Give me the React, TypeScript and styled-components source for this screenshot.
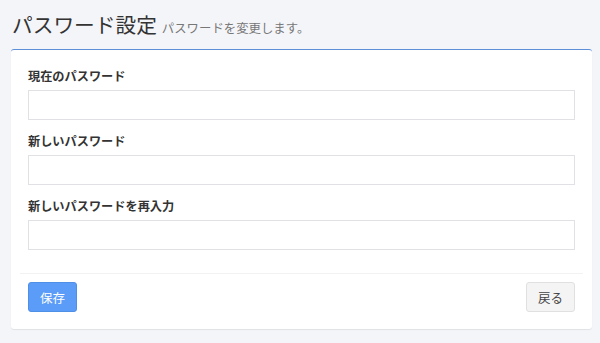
import * as React from "react";
import styled, { createGlobalStyle } from "styled-components";

const FONT = `"Noto Sans CJK JP", "Noto Sans", sans-serif`;

const GlobalStyle = createGlobalStyle`
  html, body {
    margin: 0;
    padding: 0;
    background: #f4f5f9;
    font-family: ${FONT};
  }
`;

const Page = styled.div`
  padding: 12px 8px 14px 11px;
`;

const Header = styled.div`
  display: flex;
  align-items: baseline;
  gap: 5px;
  padding-left: 1px;
  height: 24px;
  margin-bottom: 13px;
`;

const Title = styled.h1`
  margin: 0;
  font-size: 20.7px;
  font-weight: 400;
  line-height: 24px;
  color: #333;
`;

const Subtitle = styled.small`
  font-size: 12.4px;
  color: #777;
`;

const Box = styled.div`
  background: #fff;
  border-top: 1px solid #5d8fd8;
  border-radius: 3px;
  box-shadow: 0 1px 1px rgba(0, 0, 0, 0.08);
  padding: 8px 9px 8px;
`;

const Body = styled.div`
  padding: 10px 8px;
`;

const FormGroup = styled.div`
  margin-bottom: 13px;
`;

const Label = styled.label`
  display: block;
  font-size: 12.2px;
  font-weight: 700;
  line-height: 17px;
  color: #333;
  margin-bottom: 5px;
`;

const Input = styled.input`
  display: block;
  box-sizing: border-box;
  width: 100%;
  height: 30px;
  border: 1px solid #dfe1e5;
  background: #fff;
  padding: 4px 8px;
  font-family: ${FONT};
  font-size: 12px;
  outline: none;
`;

const Footer = styled.div`
  display: flex;
  justify-content: space-between;
  border-top: 1px solid #f2f2f2;
  padding: 8px 8px 9px;
`;

const Button = styled.button<{ $primary?: boolean }>`
  box-sizing: border-box;
  height: 30px;
  padding: 0 11px;
  border-radius: 3px;
  font-family: ${FONT};
  font-size: 12.5px;
  border: 1px solid ${(p) => (p.$primary ? "#4f8fe6" : "#e0e0e0")};
  background: ${(p) => (p.$primary ? "#5b9cf8" : "#f4f4f4")};
  color: ${(p) => (p.$primary ? "#fff" : "#444")};
`;

const fields = ["現在のパスワード", "新しいパスワード", "新しいパスワードを再入力"];

export default function App() {
  return (
    <>
      <GlobalStyle />
      <Page>
        <Header>
          <Title>パスワード設定</Title>
          <Subtitle>パスワードを変更します。</Subtitle>
        </Header>
        <Box>
          <Body>
            {fields.map((f) => (
              <FormGroup key={f}>
                <Label>{f}</Label>
                <Input type="password" />
              </FormGroup>
            ))}
          </Body>
          <Footer>
            <Button $primary>保存</Button>
            <Button>戻る</Button>
          </Footer>
        </Box>
      </Page>
    </>
  );
}
